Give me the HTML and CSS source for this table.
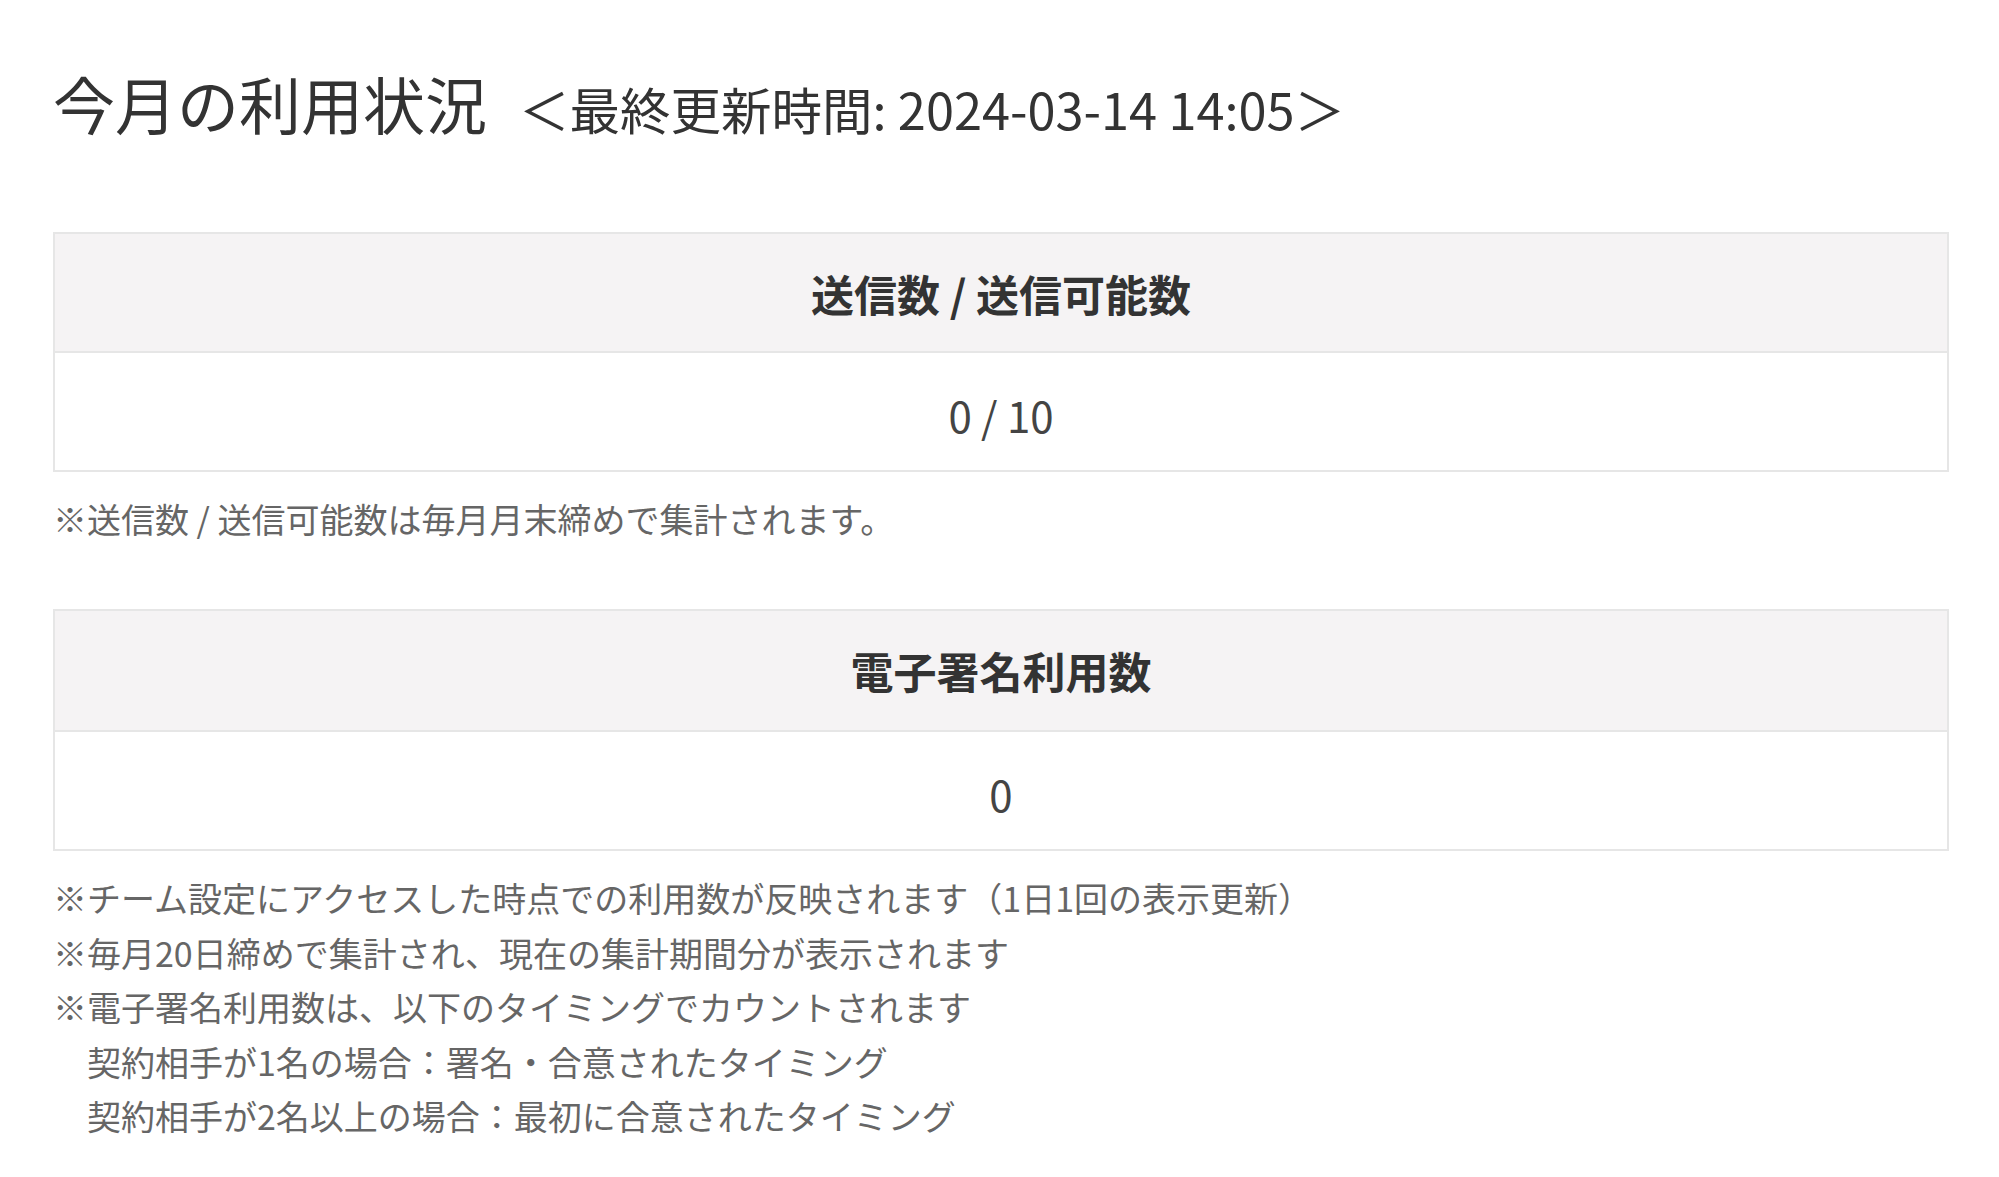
FILE: index.html
```html
<!DOCTYPE html>
<html lang="ja">
<head>
<meta charset="utf-8">
<link rel="stylesheet" href="styles.css">
</head>
<body>
<main class="page">
  <h1 class="title">今月の利用状況<span class="updated">＜最終更新時間: 2024-03-14 14:05＞</span></h1>

  <table class="usage">
    <thead><tr><th>送信数 / 送信可能数</th></tr></thead>
    <tbody><tr><td>0 / 10</td></tr></tbody>
  </table>
  <p class="note note-first">※送信数 / 送信可能数は毎月月末締めで集計されます。</p>

  <table class="usage usage-second">
    <thead><tr><th>電子署名利用数</th></tr></thead>
    <tbody><tr><td>0</td></tr></tbody>
  </table>
  <div class="notes">
    <p class="note">※チーム設定にアクセスした時点での利用数が反映されます（1日1回の表示更新）</p>
    <p class="note">※毎月20日締めで集計され、現在の集計期間分が表示されます</p>
    <p class="note">※電子署名利用数は、以下のタイミングでカウントされます</p>
    <p class="note indent">契約相手が1名の場合：署名・合意されたタイミング</p>
    <p class="note indent">契約相手が2名以上の場合：最初に合意されたタイミング</p>
  </div>
</main>
</body>
</html>
```

FILE: styles.css
```css
html, body {
  margin: 0;
  padding: 0;
  background: #ffffff;
}

body {
  font-family: "Noto Sans CJK JP", "Noto Sans", sans-serif;
  color: #333333;
}

.page {
  padding: 0 50px 0 53px;
}

.title {
  margin: 66px 0 0 0;
  font-size: 62px;
  font-weight: 400;
  line-height: 1.2;
  color: #333333;
  display: flex;
  align-items: baseline;
}

.updated {
  font-size: 50.5px;
  margin-left: 32px;
}

.usage {
  width: 100%;
  border-collapse: collapse;
  margin-top: 92px;
  border: 2px solid #e6e6e6;
}

.usage th,
.usage td {
  border: 2px solid #e6e6e6;
  text-align: center;
  font-size: 43px;
  line-height: 1.5;
  padding: 0;
  height: 119px;
  box-sizing: border-box;
}

.usage th {
  background: #f5f3f4;
  font-weight: 700;
  color: #333333;
}

.usage td {
  background: #ffffff;
  font-weight: 400;
  color: #444444;
  font-size: 42px;
  padding-top: 6px;
}

.usage-second {
  margin-top: 62px;
}

.usage-second th {
  height: 121px;
}

.note {
  margin: 0;
  font-size: 34px;
  line-height: 54.6px;
  color: #666666;
}

.note-first {
  margin-top: 20px;
}

.notes {
  margin-top: 20px;
}

.indent {
  padding-left: 34px;
}
```
